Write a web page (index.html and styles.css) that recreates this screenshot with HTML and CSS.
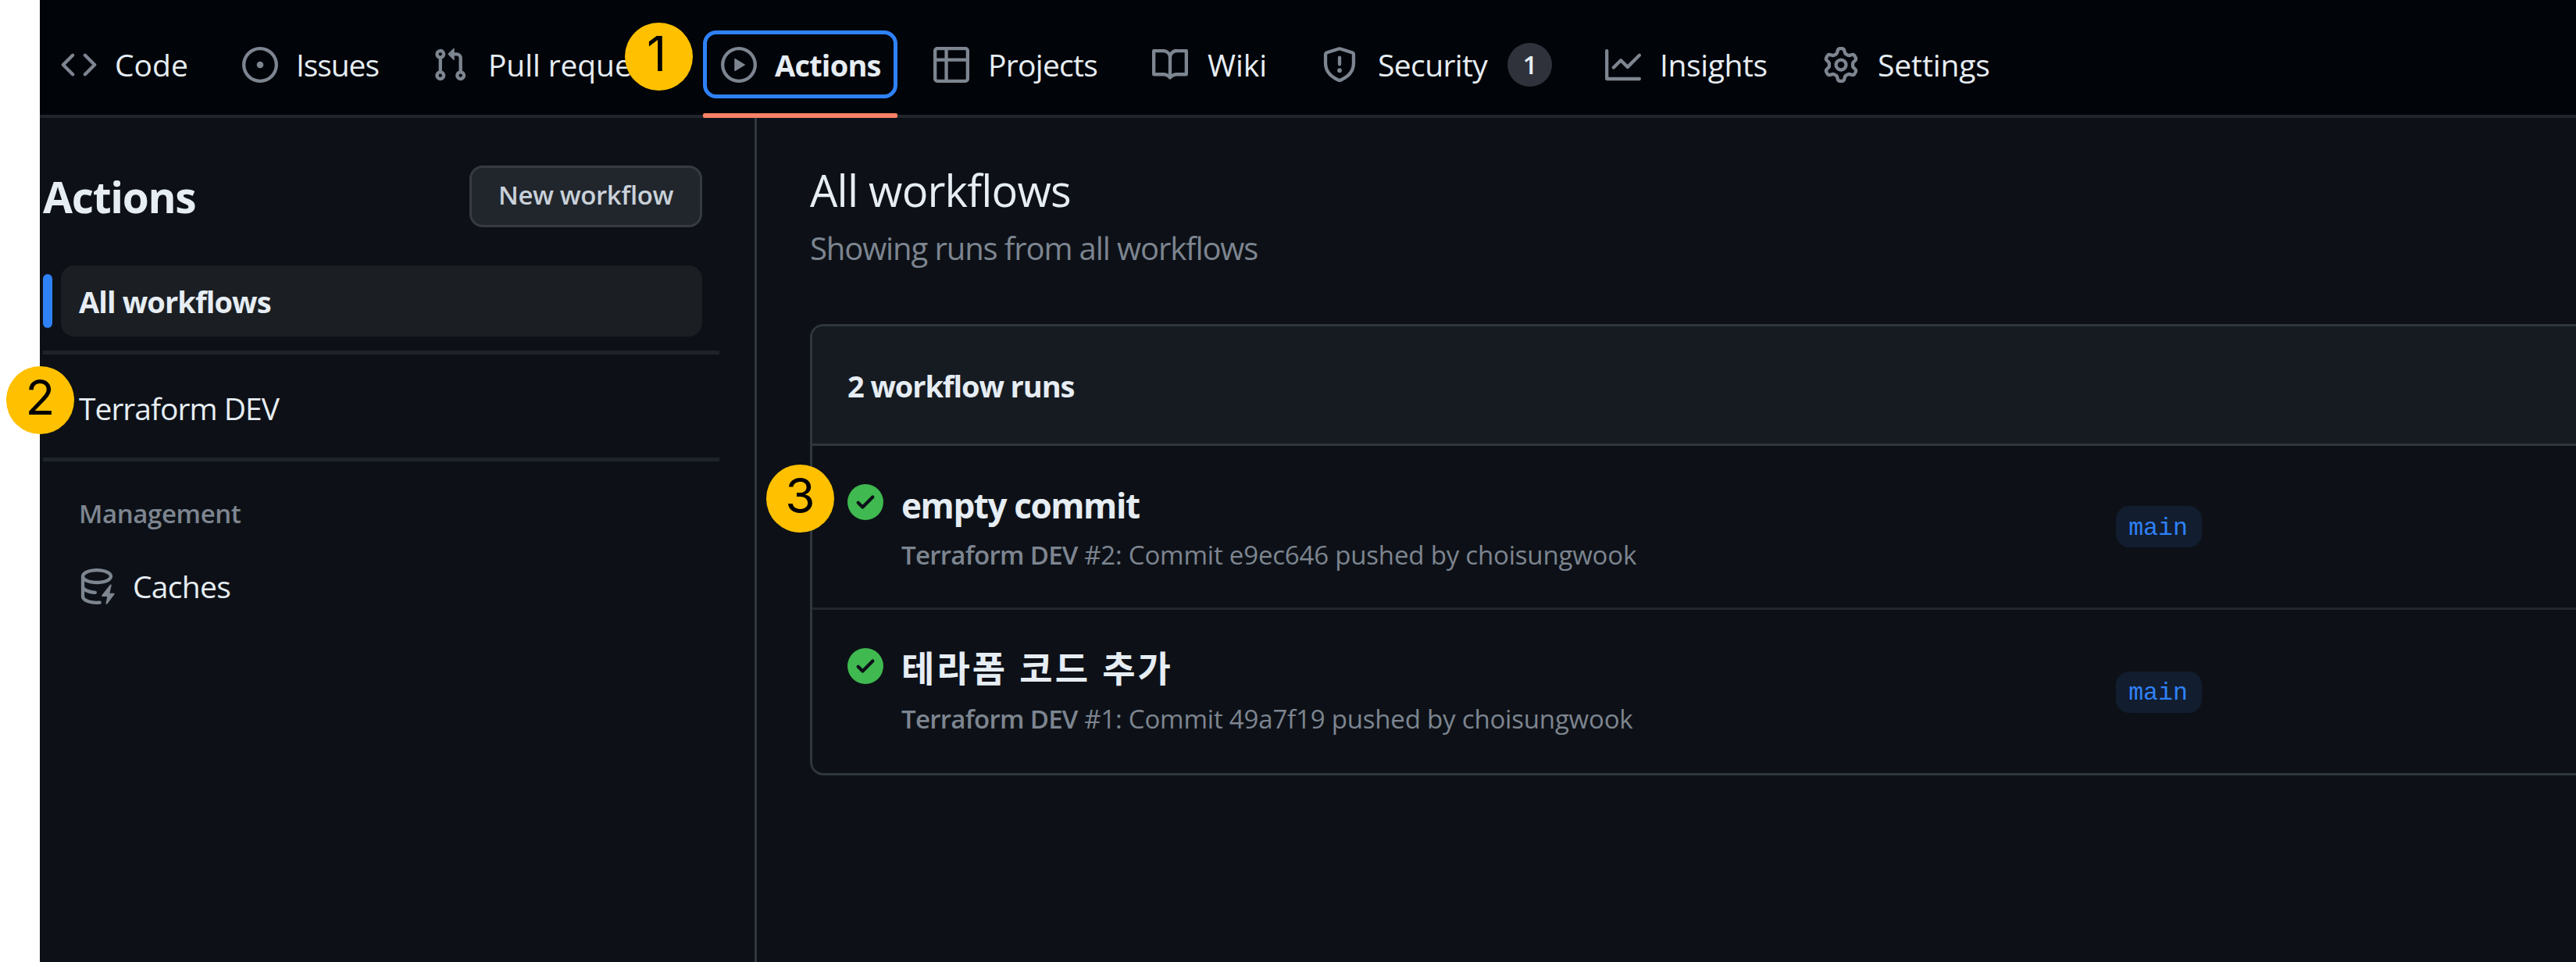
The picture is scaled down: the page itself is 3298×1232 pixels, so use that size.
FILE: index.html
```html
<!DOCTYPE html>
<html lang="en">
<head>
<meta charset="utf-8">
<title>Actions</title>
<link rel="stylesheet" href="styles.css">
</head>
<body>
<div class="app">
  <nav class="tabs">
    <a class="tab"><svg class="icon" viewBox="0 0 16 16"><path d="M4.72 3.22a.75.75 0 0 1 1.06 1.06L2.06 8l3.72 3.72a.75.75 0 1 1-1.06 1.06L.47 8.53a.75.75 0 0 1 0-1.06l4.25-4.25zm6.56 0a.75.75 0 1 0-1.06 1.06L13.94 8l-3.72 3.72a.75.75 0 1 0 1.06 1.06l4.25-4.25a.75.75 0 0 0 0-1.06l-4.25-4.25z"/></svg><span class="label code">Code</span></a>
    <a class="tab"><svg class="icon" viewBox="0 0 16 16"><path d="M8 9.5a1.5 1.5 0 1 0 0-3 1.5 1.5 0 0 0 0 3z"/><path d="M8 0a8 8 0 1 1 0 16A8 8 0 0 1 8 0ZM1.5 8a6.5 6.5 0 1 0 13 0 6.5 6.5 0 0 0-13 0Z"/></svg><span class="label issues">Issues</span></a>
    <a class="tab"><svg class="icon" viewBox="0 0 16 16"><path d="M1.5 3.25a2.25 2.25 0 1 1 3 2.122v5.256a2.251 2.251 0 1 1-1.5 0V5.372A2.25 2.25 0 0 1 1.5 3.25Zm5.677-.177L9.573.677A.25.25 0 0 1 10 .854V2.5h1A2.5 2.5 0 0 1 13.5 5v5.628a2.251 2.251 0 1 1-1.5 0V5a1 1 0 0 0-1-1h-1v1.646a.25.25 0 0 1-.427.177L7.177 3.427a.25.25 0 0 1 0-.354ZM3.75 2.5a.75.75 0 1 0 0 1.5.75.75 0 0 0 0-1.5Zm0 9.5a.75.75 0 1 0 0 1.5.75.75 0 0 0 0-1.5Zm8.25.75a.75.75 0 1 0 1.5 0 .75.75 0 0 0-1.5 0Z"/></svg><span class="label pulls">Pull requests</span></a>
    <a class="tab current"><svg class="icon" viewBox="0 0 16 16"><path d="M8 0a8 8 0 1 1 0 16A8 8 0 0 1 8 0ZM1.5 8a6.5 6.5 0 1 0 13 0 6.5 6.5 0 0 0-13 0Zm4.879-2.773 4.264 2.559a.25.25 0 0 1 0 .428l-4.264 2.559A.25.25 0 0 1 6 10.559V5.442a.25.25 0 0 1 .379-.215Z"/></svg><span class="label actions">Actions</span></a>
    <a class="tab"><svg class="icon" viewBox="0 0 16 16"><path d="M0 1.75C0 .784.784 0 1.75 0h12.5C15.216 0 16 .784 16 1.75v12.5A1.75 1.75 0 0 1 14.25 16H1.75A1.75 1.75 0 0 1 0 14.25ZM6.5 6.5v8h7.75a.25.25 0 0 0 .25-.25V6.5Zm8-1.5V1.75a.25.25 0 0 0-.25-.25H6.5V5Zm-13 1.5v7.75c0 .138.112.25.25.25H5v-8ZM5 5V1.5H1.75a.25.25 0 0 0-.25.25V5Z"/></svg><span class="label projects">Projects</span></a>
    <a class="tab"><svg class="icon" viewBox="0 0 16 16"><path d="M0 1.75A.75.75 0 0 1 .75 1h4.253c1.227 0 2.317.59 3 1.501A3.743 3.743 0 0 1 11.006 1h4.245a.75.75 0 0 1 .75.75v10.5a.75.75 0 0 1-.75.75h-4.507a2.25 2.25 0 0 0-1.591.659l-.622.621a.75.75 0 0 1-1.06 0l-.622-.621A2.25 2.25 0 0 0 5.258 13H.75a.75.75 0 0 1-.75-.75Zm7.251 10.324.004-5.073-.002-2.253A2.25 2.25 0 0 0 5.003 2.5H1.5v9h3.757a3.75 3.75 0 0 1 1.994.574ZM8.755 4.75l-.004 7.322a3.752 3.752 0 0 1 1.992-.572H14.5v-9h-3.495a2.25 2.25 0 0 0-2.25 2.25Z"/></svg><span class="label wiki">Wiki</span></a>
    <a class="tab"><svg class="icon" viewBox="0 0 16 16"><path d="M7.467.133a1.748 1.748 0 0 1 1.066 0l5.25 1.68A1.75 1.75 0 0 1 15 3.48V7c0 1.566-.32 3.182-1.303 4.682-.983 1.498-2.585 2.813-5.032 3.855a1.697 1.697 0 0 1-1.33 0c-2.447-1.042-4.049-2.357-5.032-3.855C1.32 10.182 1 8.566 1 7V3.48a1.75 1.75 0 0 1 1.217-1.667Zm.61 1.429a.25.25 0 0 0-.153 0l-5.25 1.68a.25.25 0 0 0-.174.238V7c0 1.358.275 2.666 1.057 3.86.784 1.194 2.121 2.34 4.366 3.297a.196.196 0 0 0 .154 0c2.245-.956 3.582-2.104 4.366-3.298C13.225 9.666 13.5 8.36 13.5 7V3.48a.251.251 0 0 0-.174-.237l-5.25-1.68ZM8.75 4.75v3a.75.75 0 0 1-1.5 0v-3a.75.75 0 0 1 1.5 0ZM9 10.5a1 1 0 1 1-2 0 1 1 0 0 1 2 0Z"/></svg><span class="label security">Security</span><span class="counter">1</span></a>
    <a class="tab"><svg class="icon" viewBox="0 0 16 16"><path d="M1.5 1.75V13.5h13.75a.75.75 0 0 1 0 1.5H.75a.75.75 0 0 1-.75-.75V1.75a.75.75 0 0 1 1.5 0Zm14.28 2.53-5.25 5.25a.75.75 0 0 1-1.06 0L7 7.06 4.28 9.78a.751.751 0 0 1-1.042-.018.751.751 0 0 1-.018-1.042l3.25-3.25a.75.75 0 0 1 1.06 0L10 7.94l4.72-4.72a.751.751 0 0 1 1.042.018.751.751 0 0 1 .018 1.042Z"/></svg><span class="label insights">Insights</span></a>
    <a class="tab"><svg class="icon" viewBox="0 0 16 16"><path d="M8 0a8.2 8.2 0 0 1 .701.031C9.444.095 9.99.645 10.16 1.29l.288 1.107c.018.066.079.158.212.224.231.114.454.243.668.386.123.082.233.09.299.071l1.103-.303c.644-.176 1.392.021 1.82.63.27.385.506.792.704 1.218.315.675.111 1.422-.364 1.891l-.814.806c-.049.048-.098.147-.088.294.016.257.016.515 0 .772-.01.147.038.246.088.294l.814.806c.475.469.679 1.216.364 1.891a7.977 7.977 0 0 1-.704 1.217c-.428.61-1.176.807-1.82.63l-1.102-.302c-.067-.019-.177-.011-.3.071a5.909 5.909 0 0 1-.668.386c-.133.066-.194.158-.211.224l-.29 1.106c-.168.646-.715 1.196-1.458 1.26a8.006 8.006 0 0 1-1.402 0c-.743-.064-1.289-.614-1.458-1.26l-.289-1.106c-.018-.066-.079-.158-.212-.224a5.738 5.738 0 0 1-.668-.386c-.123-.082-.233-.09-.299-.071l-1.103.303c-.644.176-1.392-.021-1.82-.63a8.12 8.12 0 0 1-.704-1.218c-.315-.675-.111-1.422.363-1.891l.815-.806c.05-.048.098-.147.088-.294a6.214 6.214 0 0 1 0-.772c.01-.147-.038-.246-.088-.294l-.815-.806C.635 6.045.431 5.298.746 4.623a7.92 7.92 0 0 1 .704-1.217c.428-.61 1.176-.807 1.82-.63l1.102.302c.067.019.177.011.3-.071.214-.143.437-.272.668-.386.133-.066.194-.158.211-.224l.29-1.106C6.009.645 6.556.095 7.299.03 7.53.01 7.764 0 8 0Zm-.571 1.525c-.036.003-.108.036-.137.146l-.289 1.105c-.147.561-.549.967-.998 1.189-.173.086-.34.183-.5.29-.417.278-.97.423-1.529.27l-1.103-.303c-.109-.03-.175.016-.195.045-.22.312-.412.644-.573.99-.014.031-.021.11.059.19l.815.806c.411.406.562.957.53 1.456a4.709 4.709 0 0 0 0 .582c.032.499-.119 1.05-.53 1.456l-.815.806c-.081.08-.073.159-.059.19.162.346.353.677.573.989.02.03.085.076.195.046l1.102-.303c.56-.153 1.113-.008 1.53.27.161.107.328.204.501.29.447.222.85.629.997 1.189l.289 1.105c.029.109.101.143.137.146a6.6 6.6 0 0 0 1.142 0c.036-.003.108-.036.137-.146l.289-1.105c.147-.561.549-.967.998-1.189.173-.086.34-.183.5-.29.417-.278.97-.423 1.529-.27l1.103.303c.109.029.175-.016.195-.045.22-.313.411-.644.573-.99.014-.031.021-.11-.059-.19l-.815-.806c-.411-.406-.562-.957-.53-1.456a4.709 4.709 0 0 0 0-.582c-.032-.499.119-1.05.53-1.456l.815-.806c.081-.08.073-.159.059-.19a6.464 6.464 0 0 0-.573-.989c-.02-.03-.085-.076-.195-.046l-1.102.303c-.56.153-1.113.008-1.53-.27a4.44 4.44 0 0 0-.501-.29c-.447-.222-.85-.629-.997-1.189l-.289-1.105c-.029-.11-.101-.143-.137-.146a6.6 6.6 0 0 0-1.142 0ZM11 8a3 3 0 1 1-6 0 3 3 0 0 1 6 0ZM9.5 8a1.5 1.5 0 1 0-3.001.001A1.5 1.5 0 0 0 9.5 8Z"/></svg><span class="label settings">Settings</span></a>
  </nav>
  <div class="layout">
    <aside class="sidebar">
      <div class="side-head"><h2 class="side-title">Actions</h2><button class="new-btn">New workflow</button></div>
      <div class="side-item selected">All workflows</div>
      <div class="divider"></div>
      <div class="side-item workflow">Terraform DEV</div>
      <div class="divider"></div>
      <div class="side-group">Management</div>
      <div class="side-item caches"><svg class="icon" viewBox="0 0 16 16"><path d="M2.5 5.724V8c0 .248.238.7 1.169 1.159.874.43 2.144.745 3.62.822a.75.75 0 1 1-.078 1.498c-1.622-.085-3.102-.432-4.204-.975a5.565 5.565 0 0 1-.507-.28V12.5c0 .133.058.318.282.551.227.237.591.483 1.101.707 1.015.447 2.47.742 4.117.742.406 0 .802-.018 1.183-.052a.751.751 0 1 1 .134 1.494C8.89 15.98 8.45 16 8 16c-1.805 0-3.475-.32-4.721-.869-.623-.274-1.173-.619-1.579-1.041-.408-.425-.7-.964-.7-1.59v-9c0-.626.292-1.165.7-1.591.406-.42.956-.766 1.579-1.04C4.525.32 6.195 0 8 0c1.806 0 3.476.32 4.721.869.623.274 1.173.619 1.579 1.041.408.425.7.964.7 1.59 0 .626-.292 1.165-.7 1.591-.406.42-.956.766-1.578 1.04C11.475 6.68 9.805 7 8 7c-1.805 0-3.475-.32-4.721-.869a6.15 6.15 0 0 1-.779-.407Zm0-2.224c0 .133.058.318.282.551.227.237.591.483 1.101.707C4.898 5.205 6.353 5.5 8 5.5c1.646 0 3.101-.295 4.118-.742.508-.224.873-.471 1.1-.708.224-.232.282-.417.282-.55 0-.133-.058-.318-.282-.551-.227-.237-.591-.483-1.101-.707C11.102 1.795 9.647 1.5 8 1.5c-1.646 0-3.101.295-4.118.742-.508.224-.873.471-1.1.708-.224.232-.282.417-.282.55Z"/><path d="M14.49 7.582a.375.375 0 0 0-.66-.313l-3.625 4.625a.375.375 0 0 0 .295.606h2.127l-.619 2.922a.375.375 0 0 0 .666.304l3.125-4.125A.375.375 0 0 0 15.5 11h-1.778l.769-3.418Z"/></svg><span>Caches</span></div>
    </aside>
    <main class="main">
      <h1 class="title">All workflows</h1>
      <p class="subtitle">Showing runs from all workflows</p>
      <section class="runs">
        <header class="runs-head">2 workflow runs</header>
        <article class="run">
          <svg class="icon ok" viewBox="0 0 16 16"><path d="M8 16A8 8 0 1 1 8 0a8 8 0 0 1 0 16Zm3.78-9.72a.751.751 0 0 0-.018-1.042.751.751 0 0 0-1.042-.018L6.75 9.19 5.28 7.72a.751.751 0 0 0-1.042.018.751.751 0 0 0-.018 1.042l2 2a.75.75 0 0 0 1.06 0Z"/></svg>
          <div class="run-text">
            <h3 class="run-title">empty commit</h3>
            <p class="run-sub"><b>Terraform DEV</b> #2: Commit e9ec646 pushed by choisungwook</p>
          </div>
          <code class="branch">main</code>
        </article>
        <article class="run">
          <svg class="icon ok" viewBox="0 0 16 16"><path d="M8 16A8 8 0 1 1 8 0a8 8 0 0 1 0 16Zm3.78-9.72a.751.751 0 0 0-.018-1.042.751.751 0 0 0-1.042-.018L6.75 9.19 5.28 7.72a.751.751 0 0 0-1.042.018.751.751 0 0 0-.018 1.042l2 2a.75.75 0 0 0 1.06 0Z"/></svg>
          <div class="run-text">
            <h3 class="run-title ko" lang="ko">테라폼 코드 추가</h3>
            <p class="run-sub"><b>Terraform DEV</b> #1: Commit 49a7f19 pushed by choisungwook</p>
          </div>
          <code class="branch">main</code>
        </article>
      </section>
    </main>
  </div>
</div>
<span class="step step-1">1</span>
<span class="step step-2">2</span>
<span class="step step-3">3</span>
</body>
</html>
```
FILE: styles.css
```css
* { box-sizing: border-box; }

body {
  margin: 0;
  height: 1232px;
  overflow: hidden;
  background: #fff;
  font-family: "Open Sans", "Noto Sans", "Noto Sans CJK KR", sans-serif;
  font-size: 39px;
  color: #e6edf3;
}

h1, h2, h3, p { margin: 0; }

.app {
  display: flex;
  flex-direction: column;
  height: 1232px;
  margin-left: 51px;
  background: #0d1117;
  white-space: nowrap;
  overflow: hidden;
}

.icon {
  flex: none;
  width: 46px;
  height: 46px;
  fill: #7d8590;
}

/* Repository tabs */
.tabs {
  display: grid;
  grid-template-columns: 232px 243px 370px 272px 280px 217px 363px 279px 290px;
  height: 151px;
  padding-left: 4px;
  background: #010409;
  border-bottom: 4px solid #21262d;
}

.tab {
  display: flex;
  align-items: center;
  justify-self: start;
  gap: 23px;
  height: 87px;
  margin-top: 39px;
  padding: 0 23px;
}

.issues { letter-spacing: -1.1px; }
.pulls { margin-left: 3px; letter-spacing: -0.1px; }
.actions { letter-spacing: -0.8px; }
.projects { margin-left: 1px; letter-spacing: -0.7px; }
.wiki { margin-left: 2px; }
.security { margin-left: 3px; letter-spacing: -0.6px; }
.insights { margin-left: 1px; letter-spacing: -0.4px; }
.settings { margin-left: 1px; letter-spacing: -0.1px; }

.current {
  position: relative;
  width: 249px;
  font-size: 38px;
  font-weight: 700;
  border: 5px solid #2f81f7;
  border-radius: 17px;
  padding: 0 18px;
}

.current::after {
  content: "";
  position: absolute;
  left: -5px;
  right: -5px;
  bottom: -30px;
  height: 6px;
  border-radius: 2px;
  background: #f78166;
}

.counter {
  width: 57px;
  height: 56px;
  margin-left: 3px;
  border-radius: 28px;
  background: #2f323a;
  font-size: 33px;
  font-weight: 600;
  line-height: 56px;
  text-align: center;
}

/* Page columns */
.layout {
  display: grid;
  grid-template-columns: 918px 1fr;
  flex: 1;
}

.sidebar {
  padding: 61px 45px 0 4px;
  border-right: 3px solid #30363d;
}

.side-head {
  display: flex;
  align-items: center;
  justify-content: space-between;
  height: 79px;
  margin: 0 22px 49px 0;
}

.side-title {
  font-size: 55px;
  font-weight: 700;
  letter-spacing: -1.3px;
}

.new-btn {
  width: 298px;
  height: 79px;
  padding: 0;
  border: 3px solid #363b42;
  border-radius: 17px;
  background: #21262d;
  color: #c9d1d9;
  font: 600 33px/70px "Open Sans", sans-serif;
  letter-spacing: -0.4px;
  padding-bottom: 3px;
}

.side-item {
  display: flex;
  align-items: center;
  gap: 23px;
  height: 91px;
  margin: 0 22px 18px 23px;
  padding-left: 23px;
}

.workflow {
  margin-top: 23px;
  letter-spacing: -1px;
}

.caches { letter-spacing: -0.7px; }

.selected {
  position: relative;
  border-radius: 17px;
  background: #1b1f23;
  font-size: 38px;
  font-weight: 700;
  letter-spacing: -0.9px;
}

.selected::before {
  content: "";
  position: absolute;
  left: -23px;
  top: 11px;
  width: 12px;
  height: 69px;
  border-radius: 6px;
  background: #2f81f7;
}

.divider {
  height: 5px;
  background: #1e232a;
}

.side-group {
  height: 86px;
  margin: 24px 0 4px 46px;
  color: #7d8590;
  font-size: 33px;
  font-weight: 600;
  letter-spacing: -0.4px;
  line-height: 86px;
}

.main { padding: 49px 0 0 68px; }

.title {
  font-size: 56px;
  font-weight: 400;
  letter-spacing: -0.8px;
  line-height: 86px;
}

.subtitle {
  margin: 2px 0 67px;
  color: #7d8590;
  font-size: 40px;
  letter-spacing: -1.1px;
  line-height: 60px;
}

/* Run list, continuing past the right edge of the window */
.runs {
  height: 578px;
  border: 3px solid #30363d;
  border-right: 0;
  border-radius: 17px 0 0 17px;
  overflow: hidden;
}

.runs-head {
  height: 153px;
  padding-left: 45px;
  border-bottom: 3px solid #30363d;
  background: #161b22;
  font-size: 38px;
  font-weight: 700;
  letter-spacing: -1.1px;
  line-height: 152px;
}

.run {
  display: grid;
  grid-template-columns: 46px 1532px 110px;
  column-gap: 23px;
  height: 210px;
  padding: 40px 0 0 45px;
}

.run + .run { height: 209px; }

.run:not(:last-child) { border-bottom: 3px solid #21262d; }

.ok {
  margin-top: 9px;
  fill: #3fb950;
}

.run-title {
  font-size: 44px;
  font-weight: 700;
  letter-spacing: -1.4px;
  line-height: 73px;
}

.ko {
  font-size: 46px;
  letter-spacing: 3.1px;
  line-height: 68px;
}

.run-sub {
  margin-top: 1px;
  color: #7d8590;
  font-size: 33px;
  letter-spacing: -0.19px;
  line-height: 52px;
}

.ko + .run-sub { margin-top: 6px; }

.run-sub b {
  font-weight: 600;
  letter-spacing: -0.7px;
}

.branch {
  width: 110px;
  height: 53px;
  margin-top: 37px;
  padding-right: 2px;
  border-radius: 17px;
  background: #121d2f;
  color: #2f81f7;
  font: 31.5px/58px "Liberation Mono", monospace;
  text-align: center;
}

.run + .run .branch {
  margin-top: 39px;
  line-height: 55px;
}

/* Numbered step markers laid over the page */
.step {
  position: absolute;
  width: 87px;
  height: 87px;
  border-radius: 50%;
  background: #ffc000;
  color: #000;
  font: 400 62px/79px Inter, sans-serif;
  text-align: center;
}

.step-1 { left: 800px; top: 29px; padding-right: 6px; }
.step-2 { left: 8px; top: 469px; }
.step-3 { left: 981px; top: 595px; }
```
